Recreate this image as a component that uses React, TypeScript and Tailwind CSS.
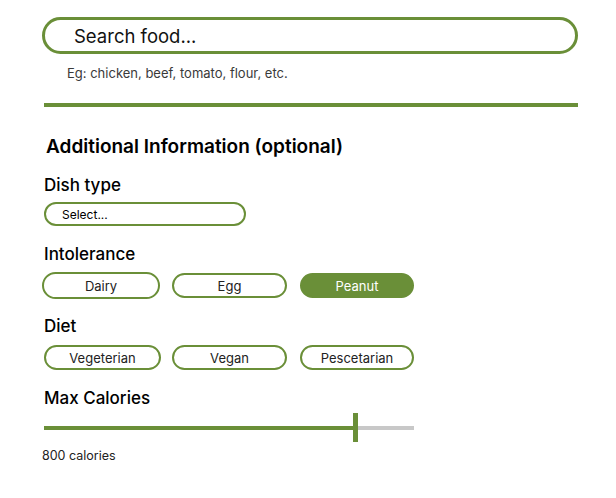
import React from "react";

function Pill({ label, w, active, h = 25 }: { label: string; w: number; active?: boolean; h?: number }) {
  return (
    <div
      className={
        "flex items-center justify-center rounded-full border-2 border-[#6a8f38] text-[13px] pt-[2px] " +
        (active ? "bg-[#6a8f38] text-white" : "bg-white text-[#222]")
      }
      style={{ width: w, height: h }}
    >
      {label}
    </div>
  );
}

export default function App() {
  return (
    <div className="w-[616px] h-[498px] bg-white text-black" style={{ fontFamily: "Inter, 'Noto Sans', sans-serif" }}>
      <div className="pt-[17px]">
        <div className="ml-[42px] w-[536px] h-[37px] rounded-full border-[3px] border-[#6a8f38] flex items-center pl-[29px] pt-[1px]">
          <span className="text-[18.5px] leading-none text-[#111]">Search food...</span>
        </div>
        <div className="ml-[67px] mt-[11px] text-[13px] leading-[16px] text-[#3a3a3a]">
          Eg: chicken, beef, tomato, flour, etc.
        </div>
        <div className="ml-[44px] mt-[22px] w-[534px] h-[4px] bg-[#6a8f38]" />
        <div className="ml-[46px] mt-[28px] text-[19px] leading-[24px] font-semibold">
          Additional Information (optional)
        </div>
        <div className="ml-[44px] mt-[14px] text-[17px] leading-[24px] font-medium">Dish type</div>
        <div className="ml-[44px] mt-[5px] w-[202px] h-[24px] rounded-full border-2 border-[#6a8f38] flex items-center pl-[16px] pt-[1px] text-[12px]">
          Select...
        </div>
        <div className="ml-[44px] mt-[16px] text-[17px] leading-[24px] font-medium">Intolerance</div>
        <div className="ml-[42px] mt-[6px] flex items-center">
          <Pill label="Dairy" w={118} h={27} />
          <div className="ml-[12px]"><Pill label="Egg" w={115} /></div>
          <div className="ml-[13px]"><Pill label="Peanut" w={114} active /></div>
        </div>
        <div className="ml-[44px] mt-[15px] text-[17px] leading-[24px] font-medium">Diet</div>
        <div className="ml-[44px] mt-[7px] flex items-center">
          <Pill label="Vegeterian" w={117} />
          <div className="ml-[11px]"><Pill label="Vegan" w={115} /></div>
          <div className="ml-[13px]"><Pill label="Pescetarian" w={114} /></div>
        </div>
        <div className="ml-[44px] mt-[16px] text-[17px] leading-[24px] font-medium">Max Calories</div>
        <div className="ml-[44px] mt-[3px] relative w-[370px] h-[29px] flex items-center">
          <div className="w-[309px] h-[4px] bg-[#6a8f38]" />
          <div className="w-[5px] h-[29px] bg-[#6a8f38]" />
          <div className="flex-1 h-[4px] bg-[#c8c8c8]" />
        </div>
        <div className="ml-[42px] mt-[6px] text-[12.5px] leading-[16px] text-[#222]">800 calories</div>
      </div>
    </div>
  );
}
